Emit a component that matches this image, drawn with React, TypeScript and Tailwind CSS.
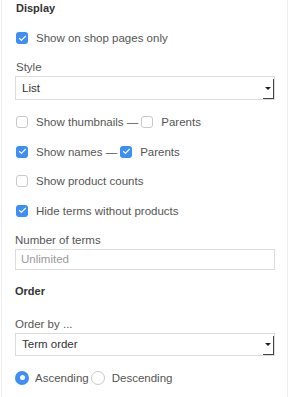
import { Check } from 'lucide-react';

function Box({ checked, className = '' }: { checked?: boolean; className?: string }) {
  return checked ? (
    <span className={`w-[12px] h-[12px] rounded-[3px] bg-[#3d8ef5] flex items-center justify-center shrink-0 ${className}`}>
      <Check size={9} strokeWidth={3} className="text-white" />
    </span>
  ) : (
    <span className={`block w-[12px] h-[12px] rounded-[3px] border border-[#c9c9c9] bg-white shrink-0 ${className}`} />
  );
}

function Row({ checked, label, className = '' }: { checked?: boolean; label: React.ReactNode; className?: string }) {
  return (
    <div className={`flex items-center h-[16px] ${className}`}>
      <Box checked={checked} />
      <span className="ml-[8px] text-[#555]">{label}</span>
    </div>
  );
}

function Select({ value, className = '' }: { value: string; className?: string }) {
  return (
    <div className={`relative flex items-center w-[260px] border border-[#dcdcdc] bg-white ${className}`}>
      <span className="pl-[6px] text-[#333]">{value}</span>
      <div className="absolute right-0 top-[2px] bottom-0 w-[11px] border-r border-b border-[#444] flex items-center justify-center">
        <span className="w-0 h-0 border-l-[3px] border-r-[3px] border-t-[3px] border-l-transparent border-r-transparent border-t-[#222]" />
      </div>
    </div>
  );
}

export default function App() {
  return (
    <div
      className="w-[289px] h-[397px] bg-white pl-[1px] overflow-hidden text-[11.5px] leading-[16px]"
      style={{ fontFamily: '"Liberation Sans", Arial, sans-serif' }}
    >
      <div className="w-[287px] h-full border-x border-[#eeeeee] pl-[13px]">
        {/* Display */}
        <div className="font-bold text-[#333] pl-[1px] text-[11px]">Display</div>
        <Row className="mt-[14px] pl-[1px]" checked label="Show on shop pages only" />

        <div className="mt-[13px] text-[#555] pl-[1px]">Style</div>
        <Select value="List" className="mt-[1px] h-[24px]" />

        <div className="flex items-center h-[16px] mt-[14px] pl-[1px]">
          <Box />
          <span className="ml-[8px] text-[#555]">Show thumbnails —</span>
          <Box className="ml-[3px]" />
          <span className="ml-[8px] text-[#555]">Parents</span>
        </div>
        <div className="flex items-center h-[16px] mt-[13.5px] pl-[1px]">
          <Box checked />
          <span className="ml-[8px] text-[#555]">Show names —</span>
          <Box checked className="ml-[3px]" />
          <span className="ml-[8px] text-[#555]">Parents</span>
        </div>
        <Row className="mt-[13.5px] pl-[1px]" label="Show product counts" />
        <Row className="mt-[13.5px] pl-[1px]" checked label="Hide terms without products" />

        <div className="mt-[13px] text-[#555]">Number of terms</div>
        <div className="mt-[1px] w-[260px] h-[21px] border border-[#dcdcdc] flex items-center pl-[5px] text-[#9a9a9a]">
          Unlimited
        </div>

        {/* Order */}
        <div className="mt-[13px] font-bold text-[#333] text-[11px]">Order</div>
        <div className="mt-[17px] text-[#555]">Order by ...</div>
        <Select value="Term order" className="mt-[1px] h-[23px]" />

        <div className="flex items-center h-[16px] mt-[14px]">
          <span className="w-[14px] h-[14px] rounded-full bg-[#3d8ef5] flex items-center justify-center">
            <span className="w-[5px] h-[5px] rounded-full bg-white" />
          </span>
          <span className="ml-[6px] text-[#555]">Ascending</span>
          <span className="ml-[2px] w-[14px] h-[14px] rounded-full border border-[#c9c9c9]" />
          <span className="ml-[7px] text-[#555]">Descending</span>
        </div>
      </div>
    </div>
  );
}
